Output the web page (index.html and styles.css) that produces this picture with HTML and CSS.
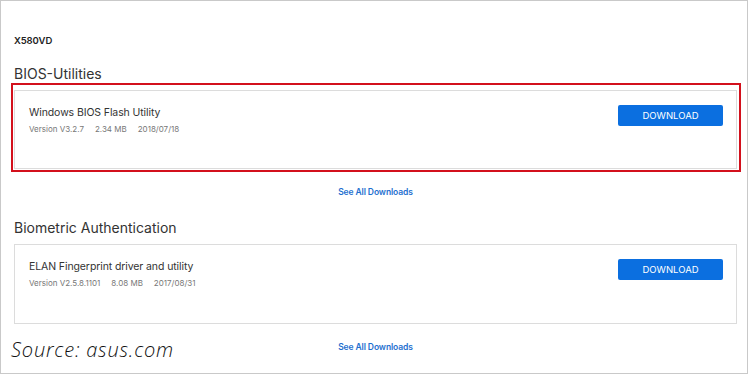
FILE: index.html
```html
<!DOCTYPE html>
<html lang="en">
<head>
<meta charset="utf-8">
<title>X580VD Downloads</title>
<link rel="stylesheet" href="styles.css">
</head>
<body>
<div class="frame">
  <div class="model">X580VD</div>

  <section class="group group-first">
    <h2 class="group-title">BIOS-Utilities</h2>
    <div class="card-wrap">
      <div class="card">
        <div class="info">
          <div class="item-title">Windows BIOS Flash Utility</div>
          <div class="meta"><span>Version V3.2.7</span><span>2.34 MB</span><span>2018/07/18</span></div>
        </div>
        <button class="btn">DOWNLOAD</button>
      </div>
      <div class="highlight"></div>
    </div>
    <a class="see-all" href="#">See All Downloads</a>
  </section>

  <section class="group group-second">
    <h2 class="group-title">Biometric Authentication</h2>
    <div class="card-wrap">
      <div class="card">
        <div class="info">
          <div class="item-title">ELAN Fingerprint driver and utility</div>
          <div class="meta"><span>Version V2.5.8.1101</span><span>8.08 MB</span><span>2017/08/31</span></div>
        </div>
        <button class="btn">DOWNLOAD</button>
      </div>
    </div>
    <a class="see-all" href="#">See All Downloads</a>
  </section>

  <div class="source">Source: asus.com</div>
</div>
</body>
</html>
```

FILE: styles.css
```css
* { box-sizing: border-box; }
html, body { margin: 0; padding: 0; background: #fff; }
body { font-family: Inter, "Open Sans", "Liberation Sans", sans-serif; color: #333; }

.frame {
  position: relative;
  width: 748px;
  height: 374px;
  border: 1px solid #c9c9c9;
  padding: 0 10px 0 13px;
  overflow: hidden;
}

.model {
  padding-top: 33px;
  font-size: 9.5px;
  line-height: 13px;
  font-weight: 600;
  color: #222;
  letter-spacing: -0.1px;
}

.group-title {
  margin: 0;
  font-size: 14px;
  line-height: 20px;
  font-weight: 400;
  color: #333;
  letter-spacing: 0;
}
.group-first .group-title { margin-top: 17px; }
.group-second .group-title { margin-top: 20px; }

.card-wrap { position: relative; margin-top: 6px; }

.card {
  display: flex;
  justify-content: space-between;
  align-items: flex-start;
  height: 79px;
  border: 1px solid #dcdcdc;
  padding: 14px 13px 0 14px;
}
.group-second .card { height: 80px; }

.item-title {
  margin-top: 1px;
  font-size: 10.5px;
  line-height: 14px;
  color: #333;
  letter-spacing: -0.1px;
}

.meta {
  display: flex;
  gap: 11px;
  margin-top: 4px;
  font-size: 8px;
  line-height: 10px;
  color: #777;
  letter-spacing: 0;
}

.btn {
  width: 105px;
  height: 21px;
  border: 0;
  border-radius: 2px;
  background: #0b6fe0;
  color: #fff;
  font-family: inherit;
  font-size: 9.5px;
  letter-spacing: 0;
  padding: 0;
}

.highlight {
  position: absolute;
  left: -3px;
  top: -7px;
  right: -4px;
  bottom: -3px;
  border: 2px solid #d3101c;
  pointer-events: none;
}

.see-all {
  display: block;
  width: max-content;
  margin: 17px auto 0;
  font-size: 8.5px;
  line-height: 12px;
  font-weight: 600;
  color: #1e6fcf;
  text-decoration: none;
  letter-spacing: -0.1px;
}

.source {
  position: absolute;
  left: 10px;
  top: 337px;
  font-family: "Open Sans", sans-serif;
  font-style: italic;
  font-weight: 300;
  font-size: 20px;
  line-height: 24px;
  color: #111;
  letter-spacing: 0.8px;
}
```
